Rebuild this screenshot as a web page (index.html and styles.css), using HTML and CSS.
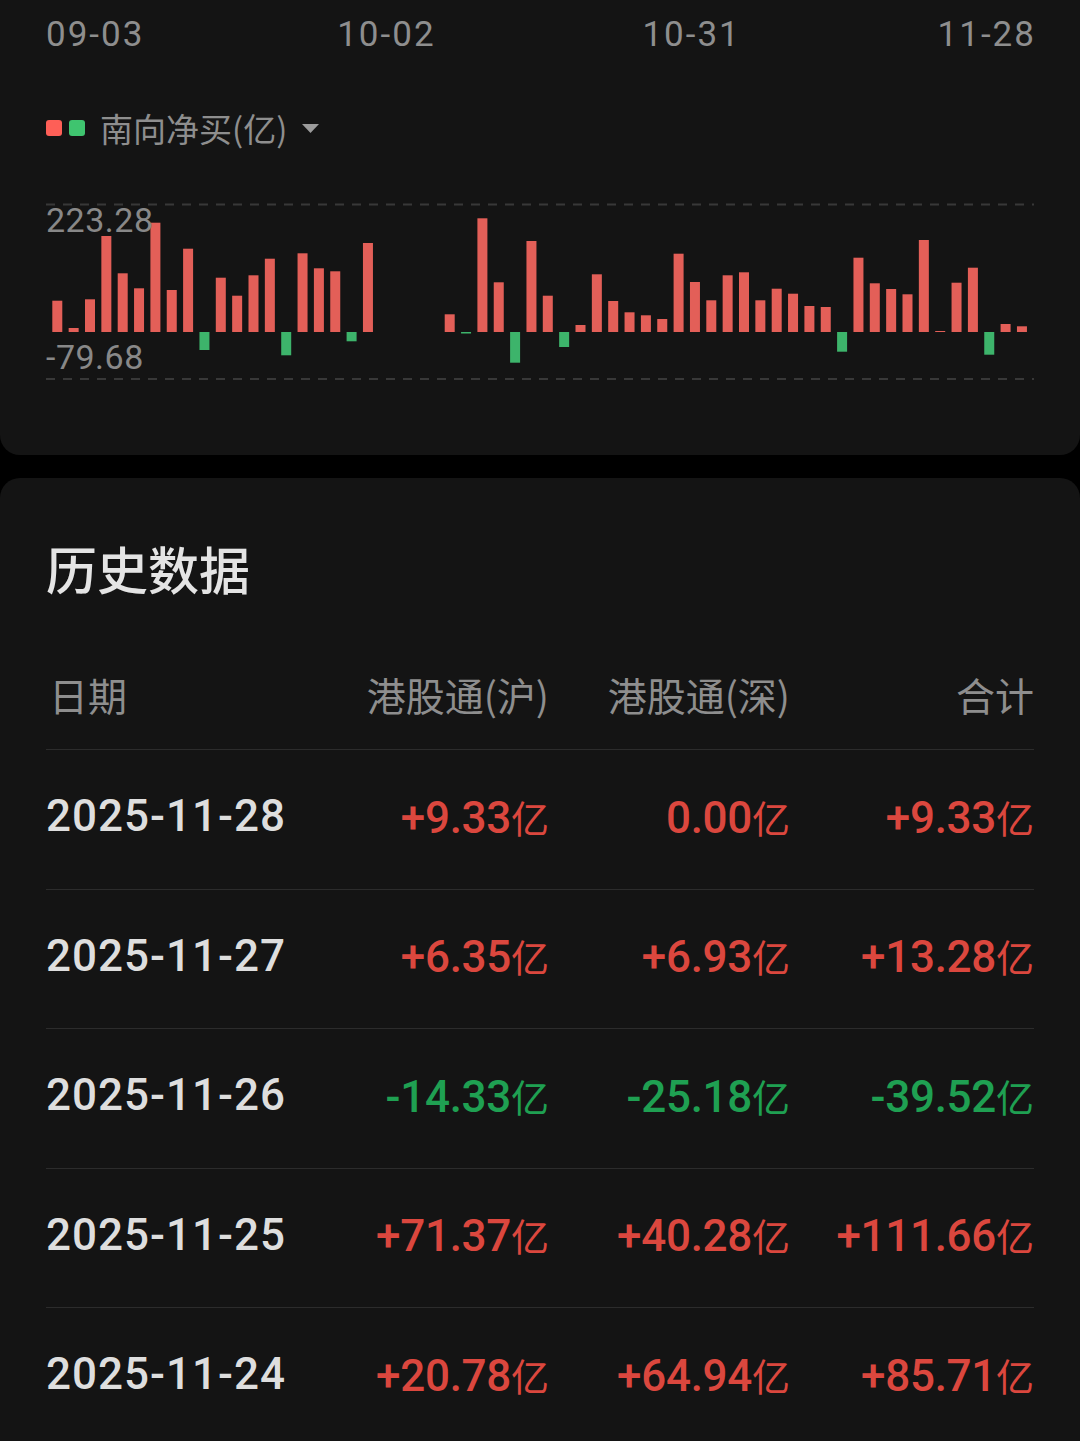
FILE: index.html
```html
<!DOCTYPE html>
<html lang="zh-CN">
<head>
    <meta charset="UTF-8">
    <title>南向资金</title>
    <link rel="stylesheet" href="styles.css">
</head>
<body>
    <!-- 走势图卡片 -->
    <div class="chart-card">
        <div class="axis-dates">
            <span>09-03</span>
            <span>10-02</span>
            <span>10-31</span>
            <span>11-28</span>
        </div>

        <div class="legend">
            <i class="sq sq-red"></i>
            <i class="sq sq-green"></i>
            <span class="legend-text">南向净买(亿)</span>
            <svg class="caret" width="17" height="9" viewBox="0 0 17 9"><polygon points="0,0 17,0 8.5,9" fill="#9b9b9b"/></svg>
        </div>

        <div class="plot">
            <svg width="988" height="200" viewBox="0 0 988 200">
                <g stroke="#383838" stroke-width="2" stroke-dasharray="9 8">
                    <line x1="0" y1="14.5" x2="988" y2="14.5"/>
                    <line x1="0" y1="189" x2="988" y2="189"/>
                </g>
                <g class="up">
                    <rect x="6.3" y="110.7" width="10" height="31.3"/>
                    <rect x="22.65" y="138" width="10" height="4"/>
                    <rect x="39" y="109.3" width="10" height="32.7"/>
                    <rect x="55.35" y="46" width="10" height="96"/>
                    <rect x="71.7" y="83.3" width="10" height="58.7"/>
                    <rect x="88.05" y="98.3" width="10" height="43.7"/>
                    <rect x="104.4" y="32.7" width="10" height="109.3"/>
                    <rect x="120.75" y="100" width="10" height="42"/>
                    <rect x="137.1" y="58.7" width="10" height="83.3"/>
                    <rect x="169.8" y="87.7" width="10" height="54.3"/>
                    <rect x="186.15" y="105.7" width="10" height="36.3"/>
                    <rect x="202.5" y="85.3" width="10" height="56.7"/>
                    <rect x="218.85" y="68.7" width="10" height="73.3"/>
                    <rect x="251.55" y="63.3" width="10" height="78.7"/>
                    <rect x="267.9" y="78.3" width="10" height="63.7"/>
                    <rect x="284.25" y="81.3" width="10" height="60.7"/>
                    <rect x="316.95" y="53" width="10" height="89"/>
                    <rect x="398.7" y="124.3" width="10" height="17.7"/>
                    <rect x="431.4" y="28.3" width="10" height="113.7"/>
                    <rect x="447.75" y="92.3" width="10" height="49.7"/>
                    <rect x="480.45" y="51" width="10" height="91"/>
                    <rect x="496.8" y="105.7" width="10" height="36.3"/>
                    <rect x="529.5" y="135" width="10" height="7"/>
                    <rect x="545.85" y="84.3" width="10" height="57.7"/>
                    <rect x="562.2" y="111" width="10" height="31"/>
                    <rect x="578.55" y="122.3" width="10" height="19.7"/>
                    <rect x="594.9" y="125.3" width="10" height="16.7"/>
                    <rect x="611.25" y="129" width="10" height="13"/>
                    <rect x="627.6" y="63.7" width="10" height="78.3"/>
                    <rect x="643.95" y="92" width="10" height="50"/>
                    <rect x="660.3" y="110.3" width="10" height="31.7"/>
                    <rect x="676.65" y="85.3" width="10" height="56.7"/>
                    <rect x="693" y="82.3" width="10" height="59.7"/>
                    <rect x="709.35" y="110.3" width="10" height="31.7"/>
                    <rect x="725.7" y="98.7" width="10" height="43.3"/>
                    <rect x="742.05" y="103.7" width="10" height="38.3"/>
                    <rect x="758.4" y="116" width="10" height="26"/>
                    <rect x="774.75" y="117" width="10" height="25"/>
                    <rect x="807.45" y="67.7" width="10" height="74.3"/>
                    <rect x="823.8" y="93.3" width="10" height="48.7"/>
                    <rect x="840.15" y="99" width="10" height="43"/>
                    <rect x="856.5" y="104.3" width="10" height="37.7"/>
                    <rect x="872.85" y="50" width="10" height="92"/>
                    <rect x="889.2" y="141" width="10" height="1" fill="#8a3a36"/>
                    <rect x="905.55" y="92.7" width="10" height="49.3"/>
                    <rect x="921.9" y="77.7" width="10" height="64.3"/>
                    <rect x="954.6" y="134" width="10" height="8"/>
                    <rect x="970.95" y="136.3" width="10" height="5.7"/>
                </g>
                <g class="down">
                    <rect x="153.45" y="142" width="10" height="18"/>
                    <rect x="235.2" y="142" width="10" height="23.3"/>
                    <rect x="300.6" y="142" width="10" height="9.3"/>
                    <rect x="415.05" y="142" width="10" height="1.5"/>
                    <rect x="464.1" y="142" width="10" height="30.7"/>
                    <rect x="513.15" y="142" width="10" height="15"/>
                    <rect x="791.1" y="142" width="10" height="19.7"/>
                    <rect x="938.25" y="142" width="10" height="22.7"/>
                </g>
            </svg>
            <span class="y-label y-max">223.28</span>
            <span class="y-label y-min">-79.68</span>
        </div>
    </div>

    <!-- 历史数据 -->
    <div class="history-card">
        <h2 class="history-title">历史数据</h2>

        <div class="table">
            <div class="row head">
                <span>日期</span>
                <span class="num-col">港股通(沪)</span>
                <span class="num-col">港股通(深)</span>
                <span class="num-col">合计</span>
            </div>
            <div class="row">
                <span class="date">2025-11-28</span>
                <span class="num-col val up">+9.33<em>亿</em></span>
                <span class="num-col val up">0.00<em>亿</em></span>
                <span class="num-col val up">+9.33<em>亿</em></span>
            </div>
            <div class="row">
                <span class="date">2025-11-27</span>
                <span class="num-col val up">+6.35<em>亿</em></span>
                <span class="num-col val up">+6.93<em>亿</em></span>
                <span class="num-col val up">+13.28<em>亿</em></span>
            </div>
            <div class="row">
                <span class="date">2025-11-26</span>
                <span class="num-col val down">-14.33<em>亿</em></span>
                <span class="num-col val down">-25.18<em>亿</em></span>
                <span class="num-col val down">-39.52<em>亿</em></span>
            </div>
            <div class="row">
                <span class="date">2025-11-25</span>
                <span class="num-col val up">+71.37<em>亿</em></span>
                <span class="num-col val up">+40.28<em>亿</em></span>
                <span class="num-col val up">+111.66<em>亿</em></span>
            </div>
            <div class="row">
                <span class="date">2025-11-24</span>
                <span class="num-col val up">+20.78<em>亿</em></span>
                <span class="num-col val up">+64.94<em>亿</em></span>
                <span class="num-col val up">+85.71<em>亿</em></span>
            </div>
        </div>
    </div>
</body>
</html>
```

FILE: styles.css
```css
/* 전체 */
body {
    margin: 0;
    width: 1080px;
    background: #000;
    font-family: "Noto Sans CJK SC", sans-serif;
}

/* 走势图卡片 */
.chart-card {
    background: #141414;
    border-radius: 0 0 20px 20px;
    padding: 15px 46px 65px;
}

.axis-dates {
    display: flex;
    justify-content: space-between;
    height: 40px;
    line-height: 40px;
    font-family: "Roboto", sans-serif;
    font-size: 35px;
    letter-spacing: 2px;
    color: #8e8e8e;
    margin-right: -2px;
}

.axis-dates span:nth-child(2) {
    margin-left: -4px;
}

.axis-dates span:nth-child(3) {
    margin-left: 10px;
}

.legend {
    display: flex;
    align-items: center;
    height: 40px;
    margin-top: 53px;
}

.sq {
    width: 16px;
    height: 16px;
    border-radius: 3px;
    margin-right: 7px;
}

.sq-red {
    background: #fe5f57;
}

.sq-green {
    background: #3fc46f;
    margin-right: 15px;
}

.legend-text {
    font-size: 33px;
    color: #8e8e8e;
}

.caret {
    margin-left: 15px;
}

.plot {
    position: relative;
    margin-top: 42px;
    height: 200px;
}

.plot svg {
    display: block;
}

.up rect {
    fill: #e35f58;
}

.down rect {
    fill: #3db46b;
}

.y-label {
    position: absolute;
    left: 0;
    line-height: 34px;
    font-family: "Roboto", sans-serif;
    font-size: 34px;
    letter-spacing: 0.5px;
    color: #888;
}

.y-max {
    top: 13px;
}

.y-min {
    top: 150px;
}

/* 历史数据 */
.history-card {
    margin-top: 23px;
    background: #141414;
    border-radius: 20px 20px 0 0;
    padding: 60px 46px 0;
}

.history-title {
    margin: 0 0 42px;
    height: 60px;
    line-height: 60px;
    font-size: 51px;
    font-weight: 500;
    color: #e4e4e4;
}

.row {
    display: grid;
    grid-template-columns: 1fr 240px 241px 244px;
    align-items: center;
    box-sizing: border-box;
    height: 139.5px;
    padding-bottom: 6px;
    border-bottom: 1px solid #2c2c2c;
}

.row.head {
    height: 110px;
    padding-bottom: 2px;
    font-size: 39px;
    color: #8e8e8e;
}

.head span:first-child {
    padding-left: 3px;
}

.num-col {
    text-align: right;
}

.date,
.val {
    font-family: "Roboto", "Noto Sans CJK SC", sans-serif;
    font-size: 44px;
    font-weight: 500;
}

.date {
    color: #dedede;
    letter-spacing: 1px;
}

.val {
    letter-spacing: -0.3px;
}

.val em {
    font-style: normal;
    font-family: "Noto Sans CJK SC", sans-serif;
    font-size: 38px;
    font-weight: 400;
    letter-spacing: 0;
}

.val.up {
    color: #db473e;
}

.val.down {
    color: #1fa052;
}
```
